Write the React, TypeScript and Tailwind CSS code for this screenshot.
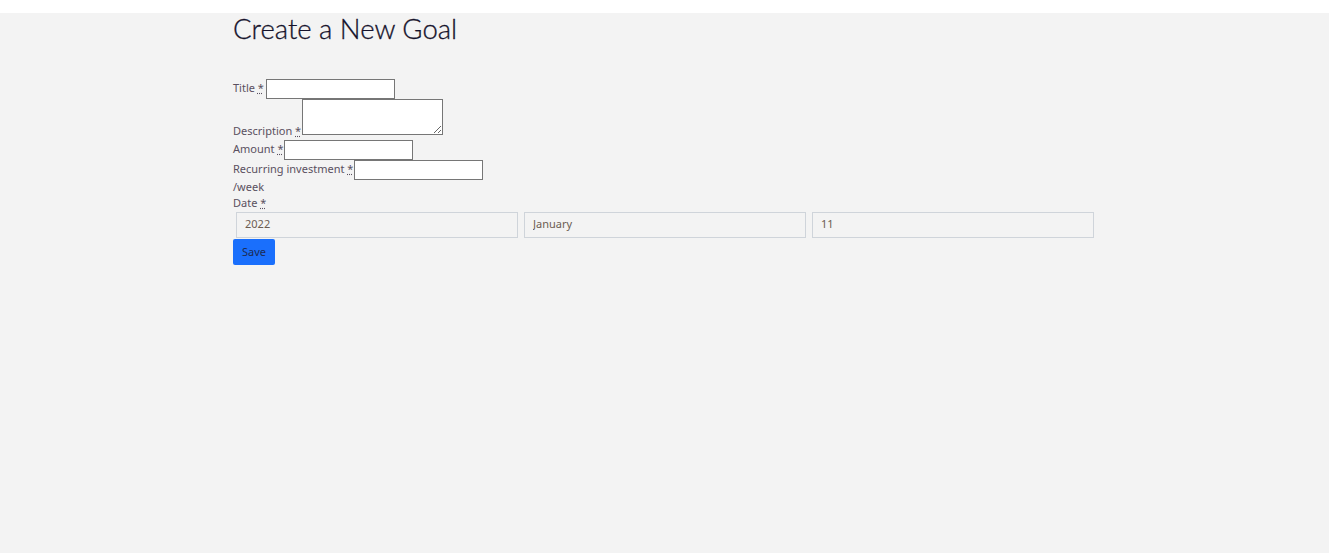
import React from "react";

const labelCls = "text-[11px] leading-none text-[#5a5060]";

function Req() {
  return (
    <abbr title="required" className="underline decoration-dotted">
      *
    </abbr>
  );
}

export default function App() {
  const dateParts = ["2022", "January", "11"];

  return (
    <div className="min-h-[553px] bg-[#f3f3f3] font-['Noto_Sans',sans-serif]">
      {/* top strip */}
      <div className="h-[13px] bg-white" />

      <div className="ml-[233px] w-[864px]">
        <h1 className="font-['Lato',sans-serif] text-[27.5px] font-light leading-[32px] text-[#15122b] [-webkit-text-stroke:0.3px_#15122b]">
          Create a New Goal
        </h1>

        <form className="mt-[34px]" onSubmit={(e) => e.preventDefault()}>
          <div className="flex h-[20px] items-end">
            <label className={`${labelCls} mb-[6px] mr-[2px]`}>
              Title <Req />
            </label>
            <input type="text" className="h-[20px] w-[129px] border border-[#767676] bg-white" />
          </div>

          <div className="flex h-[36px] items-end">
            <label className={`${labelCls} -mb-[1px] mr-px`}>
              Description <Req />
            </label>
            <textarea className="h-[36px] w-[141px] resize border border-[#767676] bg-white" />
          </div>

          <div className="mt-[5px] flex h-[20px] items-end">
            <label className={`${labelCls} mb-[6px] mr-px`}>
              Amount <Req />
            </label>
            <input type="number" className="h-[20px] w-[129px] border border-[#767676] bg-white" />
          </div>

          <div className="flex h-[20px] items-end">
            <label className={`${labelCls} mb-[6px] mr-px`}>
              Recurring investment <Req />
            </label>
            <input type="number" className="h-[20px] w-[129px] border border-[#767676] bg-white" />
          </div>

          <p className="-mt-px text-[11px] leading-[16px] text-[#5a5060]">/week</p>
          <p className="text-[11px] leading-[16px] text-[#5a5060]">
            Date <Req />
          </p>

          <div className="mt-px grid grid-cols-3">
            {dateParts.map((v) => (
              <select
                key={v}
                defaultValue={v}
                className="mx-[3px] h-[26px] appearance-none border border-[#cfd4da] bg-[#f3f3f3] pb-[2px] pl-[8px] text-[11px] text-[#6c5d52]"
              >
                <option>{v}</option>
              </select>
            ))}
          </div>

          <button
            type="submit"
            className="h-[26px] w-[42px] rounded-[2px] bg-[#1a6ffc] text-[11px] text-[#1d2b53]"
          >
            Save
          </button>
        </form>
      </div>
    </div>
  );
}
